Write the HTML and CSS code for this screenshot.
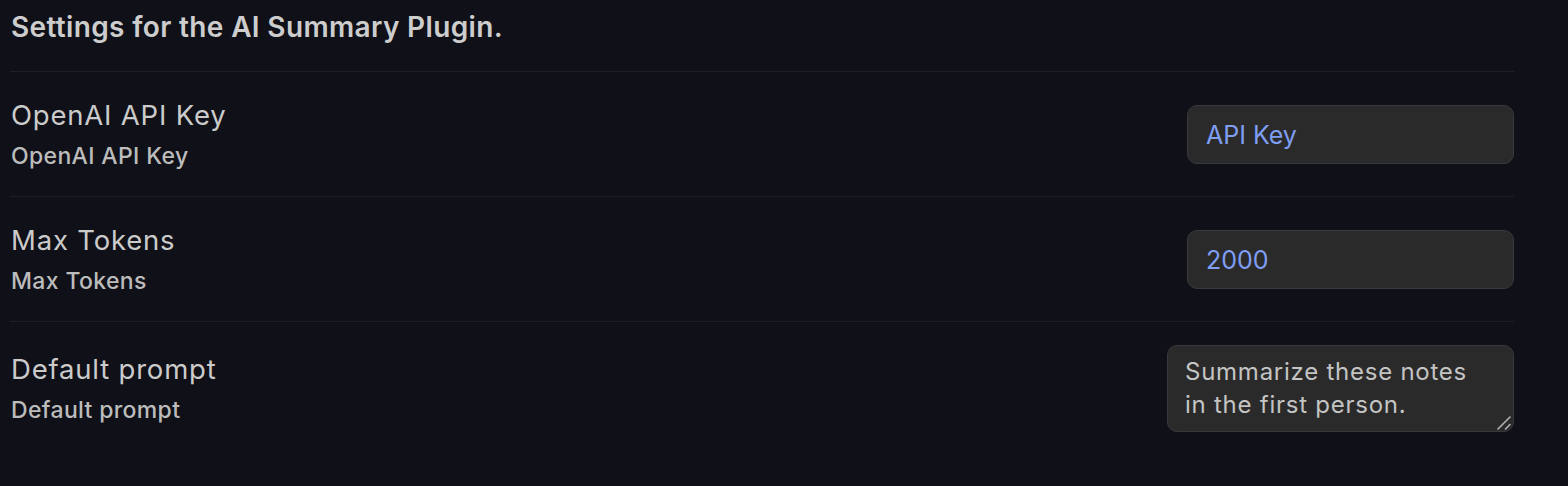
FILE: index.html
```html
<!DOCTYPE html>
<html>
<head>
<meta charset="utf-8">
<link rel="stylesheet" href="styles.css">
</head>
<body>
<div class="settings">
  <div class="heading">Settings for the AI Summary Plugin.</div>
  <div class="item">
    <div class="info">
      <div class="name">OpenAI API Key</div>
      <div class="desc">OpenAI API Key</div>
    </div>
    <div class="control">
      <input class="field" type="text" value="API Key">
    </div>
  </div>
  <div class="item">
    <div class="info">
      <div class="name">Max Tokens</div>
      <div class="desc">Max Tokens</div>
    </div>
    <div class="control">
      <input class="field" type="text" value="2000">
    </div>
  </div>
  <div class="item">
    <div class="info">
      <div class="name">Default prompt</div>
      <div class="desc">Default prompt</div>
    </div>
    <div class="control area-wrap">
      <textarea class="area">Summarize these notes in the first person.</textarea>
      <svg class="grip" width="14" height="14" viewBox="0 0 14 14">
        <line x1="1" y1="13" x2="13" y2="1" stroke="#b4b4b4" stroke-width="1.6" stroke-linecap="round"/>
        <line x1="8.5" y1="13" x2="13" y2="8.5" stroke="#b4b4b4" stroke-width="1.6" stroke-linecap="round"/>
      </svg>
    </div>
  </div>
</div>
</body>
</html>
```

FILE: styles.css
```css
html, body {
  margin: 0;
  padding: 0;
  background: #101018;
  color-scheme: dark;
}
body {
  font-family: Inter, "Noto Sans", sans-serif;
  color: #cbcbcb;
}
.settings {
  width: 1504px;
  padding-left: 10px;
}
.heading {
  height: 71px;
  box-sizing: border-box;
  padding-top: 9px;
  padding-left: 1px;
  font-size: 28px;
  line-height: 36px;
  font-weight: 600;
  letter-spacing: 0.35px;
  color: #cdcdcd;
}
.item {
  box-sizing: border-box;
  border-top: 1px solid #1d1f27;
  padding: 23px 0 22px 1px;
  display: flex;
  align-items: center;
  justify-content: space-between;
}
.info {
  padding: 2px 0;
}
.name {
  font-size: 27.5px;
  line-height: 36px;
  letter-spacing: 0.8px;
  color: #cbcbcb;
}
.desc {
  margin-top: 7px;
  font-size: 23px;
  line-height: 32px;
  font-weight: 500;
  letter-spacing: 0.35px;
  color: #bcbcbc;
}
.control {
  display: flex;
  align-items: center;
}
.area-wrap {
  position: relative;
}
.field {
  width: 327px;
  height: 59px;
  box-sizing: border-box;
  margin: 0;
  background: #2a2a2a;
  border: 1px solid #37393c;
  border-radius: 10px;
  padding: 0 18px;
  font-family: Inter, "Noto Sans", sans-serif;
  font-size: 25px;
  color: #7f9ef2;
  outline: none;
}
.area {
  display: block;
  width: 347px;
  height: 87px;
  box-sizing: border-box;
  margin: 0;
  background: #2a2a2a;
  border: 1px solid #37393c;
  border-radius: 10px;
  padding: 9px 22px 9px 17px;
  font-family: Inter, "Noto Sans", sans-serif;
  font-size: 24px;
  line-height: 33px;
  letter-spacing: 0.75px;
  color: #c4c4c4;
  outline: none;
  resize: none;
}
.grip {
  position: absolute;
  right: 3px;
  bottom: 2px;
  pointer-events: none;
}
```
